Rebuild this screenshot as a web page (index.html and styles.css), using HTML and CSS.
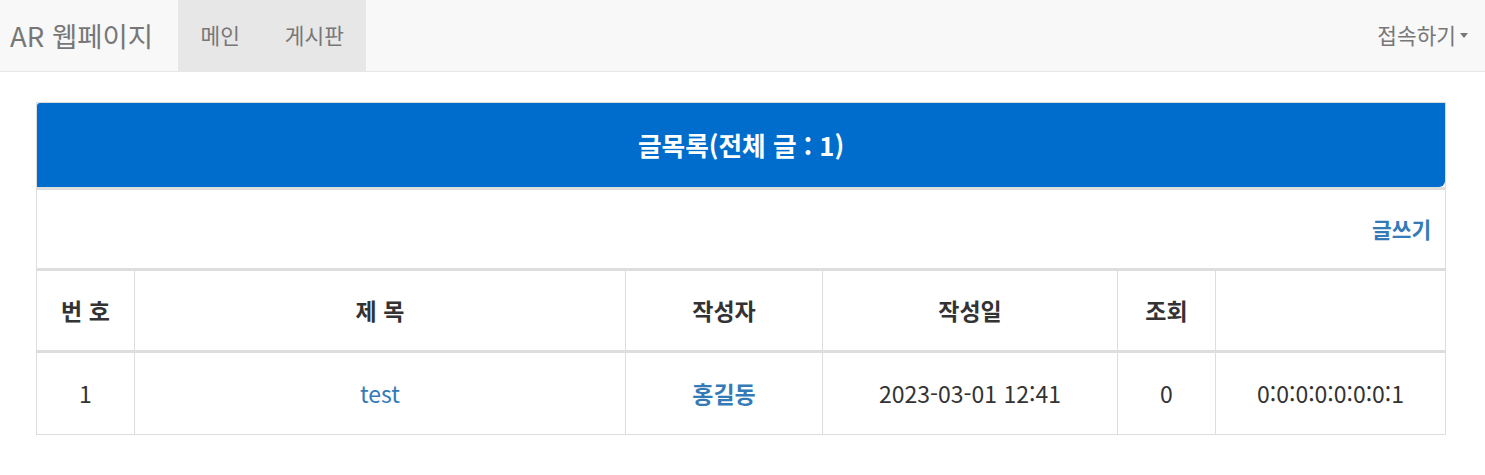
FILE: index.html
```html
<!DOCTYPE html>
<html lang="ko">
<head>
<meta charset="utf-8">
<title>AR 웹페이지</title>
<link rel="stylesheet" href="styles.css">
</head>
<body>
<nav class="navbar">
  <div class="nav-left">
    <a class="brand" href="#">AR 웹페이지</a>
    <ul class="nav-menu">
      <li><a href="#">메인</a></li>
      <li><a href="#">게시판</a></li>
    </ul>
  </div>
  <div class="nav-right">
    <a class="dropdown" href="#">접속하기<span class="caret"></span></a>
  </div>
</nav>
<main class="container">
  <table class="board">
    <colgroup>
      <col class="c-num">
      <col class="c-title">
      <col class="c-writer">
      <col class="c-date">
      <col class="c-hit">
      <col class="c-ip">
    </colgroup>
    <tr class="title-row"><th colspan="6" class="title-cell">글목록(전체 글 : 1)</th></tr>
    <tr class="write-row"><td colspan="6" class="write-cell"><a href="#" class="write-link">글쓰기</a></td></tr>
    <tr class="head-row">
      <th>번 호</th>
      <th>제 목</th>
      <th>작성자</th>
      <th>작성일</th>
      <th>조회</th>
      <th></th>
    </tr>
    <tr class="data-row">
      <td>1</td>
      <td><a href="#" class="post-link">test</a></td>
      <td><a href="#" class="writer-link">홍길동</a></td>
      <td>2023-03-01 12:41</td>
      <td>0</td>
      <td>0:0:0:0:0:0:0:1</td>
    </tr>
  </table>
</main>
</body>
</html>
```
FILE: styles.css
```css
body {
  margin: 0;
  font-family: "Noto Sans CJK KR", "Noto Sans", sans-serif;
  font-size: 21.4px;
  line-height: 1.42857;
  color: #333;
  background: #fff;
}

a { text-decoration: none; }

.navbar {
  display: flex;
  justify-content: space-between;
  height: 71px;
  background: #f8f8f8;
  border-bottom: 1px solid #e7e7e7;
}

.nav-left { display: flex; }

.brand {
  display: flex;
  align-items: center;
  width: 178px;
  box-sizing: border-box;
  padding-left: 10px;
  font-size: 27.5px;
  color: #777;
}

.nav-menu {
  display: flex;
  list-style: none;
  margin: 0;
  padding: 0;
  background: #e7e7e7;
}

.nav-menu li { display: flex; }

.nav-menu a {
  display: flex;
  align-items: center;
  padding: 0 22.5px;
  color: #777;
}

.nav-right { display: flex; }

.dropdown {
  display: flex;
  align-items: center;
  padding-right: 17px;
  color: #777;
}

.caret {
  display: inline-block;
  width: 0;
  height: 0;
  margin-left: 4px;
  border-top: 5px solid #777;
  border-left: 4px solid transparent;
  border-right: 4px solid transparent;
}

.container {
  padding: 30px 39px 40px 36px;
}

.board {
  width: 100%;
  table-layout: fixed;
  border-collapse: separate;
  border-spacing: 0;
  border: 1px solid #ddd;
  font-size: 23px;
}

.c-num { width: 97px; }
.c-title { width: 491px; }
.c-writer { width: 197px; }
.c-date { width: 295px; }
.c-hit { width: 98px; }
.c-ip { width: 230px; }

.board th,
.board td {
  box-sizing: border-box;
  padding: 0;
  text-align: center;
  vertical-align: middle;
}

.head-row th + th,
.data-row td + td {
  border-left: 1px solid #ddd;
}

.title-cell {
  height: 84px;
  background: #006dcc;
  color: #fff;
  font-size: 25.7px;
  font-weight: bold;
  border-radius: 3px 0 6px 0;
}

.write-row td {
  height: 81px;
  border-top: 3px solid #ddd;
}

.board .write-cell {
  text-align: right;
  padding-right: 14px;
  font-size: 21.4px;
}

.write-link {
  color: #337ab7;
  font-weight: bold;
}

.head-row th {
  height: 82px;
  border-top: 3px solid #ddd;
  font-weight: bold;
}

.data-row td {
  height: 84px;
  border-top: 3px solid #ddd;
}

.post-link { color: #337ab7; }

.writer-link {
  color: #337ab7;
  font-weight: bold;
}
```
